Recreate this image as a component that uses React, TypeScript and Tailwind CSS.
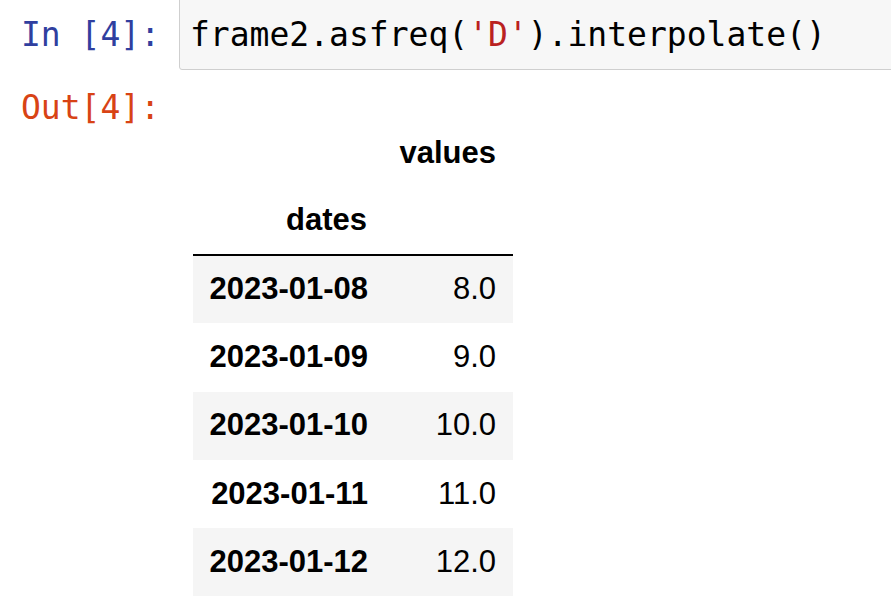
const rows = [
  ['2023-01-08', '8.0'],
  ['2023-01-09', '9.0'],
  ['2023-01-10', '10.0'],
  ['2023-01-11', '11.0'],
  ['2023-01-12', '12.0'],
];

export default function App() {
  return (
    <div className="w-[891px] h-[607px] overflow-hidden bg-white">
      {/* input cell */}
      <div className="flex">
        <div className="w-[179px] shrink-0 pr-[19px] pt-[15px] text-right text-[33px] leading-[40px] text-[#303f9f] font-['DejaVu_Sans_Mono','Liberation_Mono',monospace]">
          In&nbsp;[4]:
        </div>
        <div className="-mt-[3px] h-[73px] flex-1 -mr-[10px] rounded-[3px] border border-[#cfcfcf] bg-[#f7f7f7] pl-[10px] pt-[17px]">
          <pre className="m-0 text-[33px] leading-[40px] text-black font-['DejaVu_Sans_Mono','Liberation_Mono',monospace]">
            frame2.asfreq(<span className="text-[#ba2121]">'D'</span>).interpolate()
          </pre>
        </div>
      </div>

      {/* output cell */}
      <div className="flex">
        <div className="w-[179px] shrink-0 pr-[19px] pt-[18px] text-right text-[33px] leading-[40px] text-[#d84315] font-['DejaVu_Sans_Mono','Liberation_Mono',monospace]">
          Out[4]:
        </div>
        <div className="ml-[14px] mt-[49px]">
          <table className="border-collapse text-[31px] text-black font-['Liberation_Sans',Arial,sans-serif]">
            <thead className="border-b-2 border-black">
              <tr className="h-[68px]">
                <th className="w-[190px]"></th>
                <th className="w-[130px] pr-[17px] text-right font-bold">values</th>
              </tr>
              <tr className="h-[68px]">
                <th className="pr-[16px] text-right font-bold">dates</th>
                <th></th>
              </tr>
            </thead>
            <tbody>
              {rows.map(([d, v], i) => (
                <tr key={d} className={i % 2 === 0 ? 'h-[68.3px] bg-[#f5f5f5]' : 'h-[68.3px] bg-white'}>
                  <th className="pl-[15px] pr-[15px] text-right font-bold">{d}</th>
                  <td className="pr-[17px] text-right">{v}</td>
                </tr>
              ))}
            </tbody>
          </table>
        </div>
      </div>
    </div>
  );
}
